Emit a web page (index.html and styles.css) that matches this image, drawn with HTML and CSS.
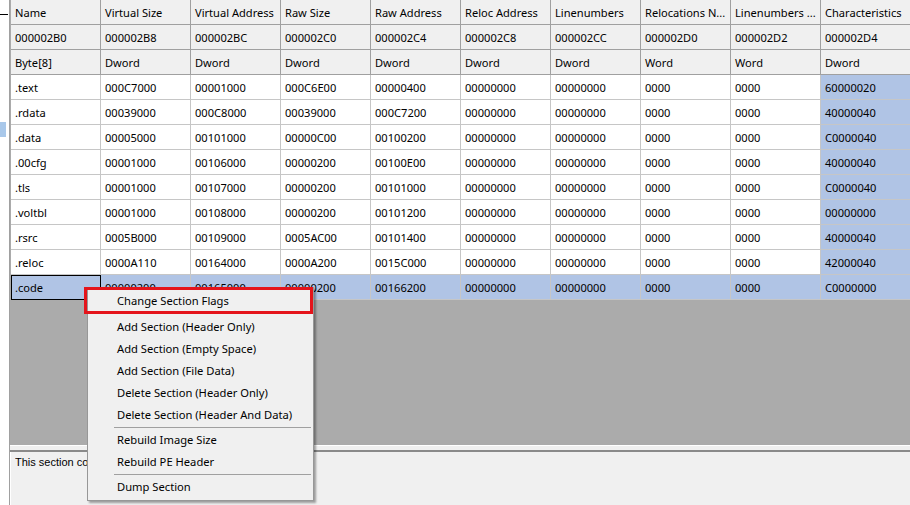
FILE: index.html
```html
<!DOCTYPE html>
<html>
<head>
<meta charset="utf-8">
<link rel="stylesheet" href="styles.css">
</head>
<body>
<div class="app">
  <div class="tree">
    <div class="tree-top"></div>
    <div class="tree-box">
      <div class="tree-gap"></div>
      <div class="tree-sel"></div>
    </div>
  </div>
  <div class="main">
    <div class="grid-area">
      <div class="grid">
        <div class="c h">Name</div><div class="c h">Virtual Size</div><div class="c h">Virtual Address</div><div class="c h">Raw Size</div><div class="c h">Raw Address</div><div class="c h">Reloc Address</div><div class="c h">Linenumbers</div><div class="c h">Relocations N...</div><div class="c h">Linenumbers ...</div><div class="c h">Characteristics</div>

        <div class="c h">000002B0</div><div class="c h">000002B8</div><div class="c h">000002BC</div><div class="c h">000002C0</div><div class="c h">000002C4</div><div class="c h">000002C8</div><div class="c h">000002CC</div><div class="c h">000002D0</div><div class="c h">000002D2</div><div class="c h">000002D4</div>

        <div class="c h">Byte[8]</div><div class="c h">Dword</div><div class="c h">Dword</div><div class="c h">Dword</div><div class="c h">Dword</div><div class="c h">Dword</div><div class="c h">Dword</div><div class="c h">Word</div><div class="c h">Word</div><div class="c h">Dword</div>

        <div class="c">.text</div><div class="c">000C7000</div><div class="c">00001000</div><div class="c">000C6E00</div><div class="c">00000400</div><div class="c">00000000</div><div class="c">00000000</div><div class="c">0000</div><div class="c">0000</div><div class="c s">60000020</div>

        <div class="c">.rdata</div><div class="c">00039000</div><div class="c">000C8000</div><div class="c">00039000</div><div class="c">000C7200</div><div class="c">00000000</div><div class="c">00000000</div><div class="c">0000</div><div class="c">0000</div><div class="c s">40000040</div>

        <div class="c">.data</div><div class="c">00005000</div><div class="c">00101000</div><div class="c">00000C00</div><div class="c">00100200</div><div class="c">00000000</div><div class="c">00000000</div><div class="c">0000</div><div class="c">0000</div><div class="c s">C0000040</div>

        <div class="c">.00cfg</div><div class="c">00001000</div><div class="c">00106000</div><div class="c">00000200</div><div class="c">00100E00</div><div class="c">00000000</div><div class="c">00000000</div><div class="c">0000</div><div class="c">0000</div><div class="c s">40000040</div>

        <div class="c">.tls</div><div class="c">00001000</div><div class="c">00107000</div><div class="c">00000200</div><div class="c">00101000</div><div class="c">00000000</div><div class="c">00000000</div><div class="c">0000</div><div class="c">0000</div><div class="c s">C0000040</div>

        <div class="c">.voltbl</div><div class="c">00001000</div><div class="c">00108000</div><div class="c">00000200</div><div class="c">00101200</div><div class="c">00000000</div><div class="c">00000000</div><div class="c">0000</div><div class="c">0000</div><div class="c s">00000000</div>

        <div class="c">.rsrc</div><div class="c">0005B000</div><div class="c">00109000</div><div class="c">0005AC00</div><div class="c">00101400</div><div class="c">00000000</div><div class="c">00000000</div><div class="c">0000</div><div class="c">0000</div><div class="c s">40000040</div>

        <div class="c">.reloc</div><div class="c">0000A110</div><div class="c">00164000</div><div class="c">0000A200</div><div class="c">0015C000</div><div class="c">00000000</div><div class="c">00000000</div><div class="c">0000</div><div class="c">0000</div><div class="c s">42000040</div>

        <div class="c s focus">.code</div><div class="c s">00000200</div><div class="c s">00165000</div><div class="c s">00000200</div><div class="c s">00166200</div><div class="c s">00000000</div><div class="c s">00000000</div><div class="c s">0000</div><div class="c s">0000</div><div class="c s">C0000000</div>
      </div>
    </div>
    <div class="splitter"></div>
    <div class="info"><div class="info-text">This section co</div></div>
  </div>
</div>

<div class="menu">
  <div class="item first">Change Section Flags</div>
  <div class="item">Add Section (Header Only)</div>
  <div class="item">Add Section (Empty Space)</div>
  <div class="item">Add Section (File Data)</div>
  <div class="item">Delete Section (Header Only)</div>
  <div class="item">Delete Section (Header And Data)</div>
  <div class="sep"></div>
  <div class="item">Rebuild Image Size</div>
  <div class="item">Rebuild PE Header</div>
  <div class="sep"></div>
  <div class="item">Dump Section</div>
</div>
<div class="mark"></div>
</body>
</html>
```

FILE: styles.css
```css
html, body {
  margin: 0;
  padding: 0;
}
body {
  width: 910px;
  height: 505px;
  overflow: hidden;
  position: relative;
  background: #fff;
  font-family: "Noto Sans", "Open Sans", sans-serif;
  font-size: 11.1px;
  color: #000;
}
.app {
  display: flex;
  height: 505px;
}
.tree {
  width: 9px;
  display: flex;
  flex-direction: column;
  background: #fff;
}
.tree-top {
  height: 14px;
}
.tree-box {
  width: 8px;
  flex: 1;
  border-top: 1px solid #000;
  display: flex;
  flex-direction: column;
}
.tree-gap {
  height: 107px;
}
.tree-sel {
  width: 6px;
  height: 15px;
  background: #a9c8ea;
}
.main {
  flex: 1;
  display: flex;
  flex-direction: column;
  border-left: 1px solid #a0a0a0;
  box-shadow: inset 1px 0 0 #696969;
  min-width: 0;
}
.grid-area {
  height: 445px;
  background: #ababab;
  padding-left: 1px;
  overflow: hidden;
}
.grid {
  display: grid;
  grid-template-columns: repeat(10, 90px);
  grid-auto-rows: 25px;
}
.c {
  box-sizing: border-box;
  background: #fff;
  border-right: 1px solid #c6c6c6;
  border-bottom: 1px solid #c6c6c6;
  padding: 1px 0 0 4px;
  line-height: 24px;
  white-space: nowrap;
  overflow: hidden;
}
.c.h {
  background: #f0f0f0;
  border-right-color: #a0a0a0;
  border-bottom-color: #a0a0a0;
}
.c.s {
  background: #b0c4e5;
}
.c.focus {
  outline: 1px solid #000;
  outline-offset: -1px;
}
.splitter {
  height: 7px;
  box-sizing: border-box;
  background: #f0f0f0;
  border-top: 1px solid #fff;
  border-bottom: 2px solid #8a8a8a;
}
.info {
  flex: 1;
  background: #f0f0f0;
  font-family: "Liberation Sans", Arial, sans-serif;
  font-size: 11px;
  padding: 4px 0 0 5px;
  box-shadow: inset 1px 0 0 #fff;
}
.info-text {
  width: 72px;
  overflow: hidden;
  white-space: nowrap;
}
.menu {
  position: absolute;
  left: 87px;
  top: 287px;
  width: 227px;
  box-sizing: border-box;
  padding: 2px;
  background: #f0f0f0;
  border: 1px solid #979797;
  box-shadow: 2px 2px 2px rgba(0,0,0,0.35);
  font-size: 11.2px;
  color: #000;
}
.item {
  height: 22px;
  line-height: 22px;
  padding-left: 27px;
  white-space: nowrap;
}
.item.first {
  margin-bottom: 4px;
}
.sep {
  height: 3px;
  box-sizing: border-box;
  margin-left: 24px;
  margin-top: 1px;
  margin-bottom: -1px;
  border-top: 1px solid #a0a0a0;
}
.mark {
  position: absolute;
  left: 84px;
  top: 287px;
  width: 229px;
  height: 27px;
  box-sizing: border-box;
  border: 3px solid #e4141b;
}
```
